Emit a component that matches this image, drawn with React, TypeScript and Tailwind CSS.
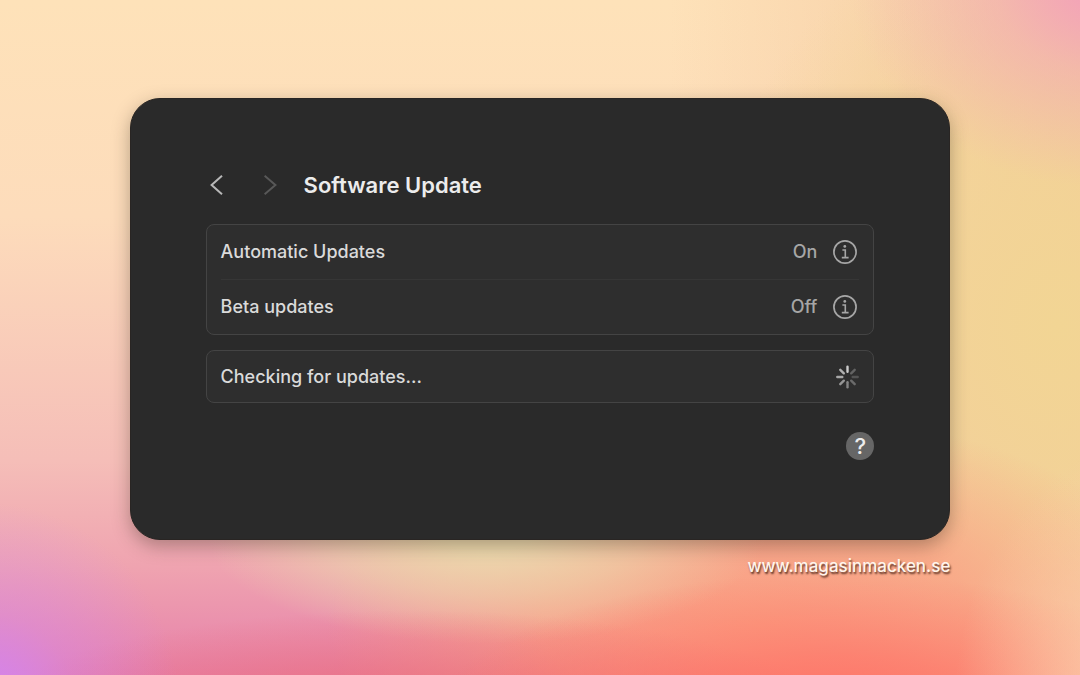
import type { ReactNode } from "react";

const SPOKES = [
  { angle: 0, opacity: 0.9 },
  { angle: 45, opacity: 0.3 },
  { angle: 90, opacity: 0.22 },
  { angle: 135, opacity: 0.35 },
  { angle: 180, opacity: 0.5 },
  { angle: 225, opacity: 0.6 },
  { angle: 270, opacity: 0.7 },
  { angle: 315, opacity: 0.75 },
];

const Spinner = () => (
  <svg
    className="size-6"
    viewBox="0 0 24 24"
    role="img"
    aria-label="Loading"
    stroke="#dcdcdc"
    strokeWidth="2.4"
    strokeLinecap="round"
  >
    {SPOKES.map(({ angle, opacity }) => (
      <line
        key={angle}
        x1="12.5"
        y1="1.8"
        x2="12.5"
        y2="6.8"
        opacity={opacity}
        transform={`rotate(${angle} 12.5 12)`}
      />
    ))}
  </svg>
);

const InfoIcon = () => (
  <svg className="size-6" viewBox="0 0 24 24" fill="none" stroke="#a6a6a6">
    <circle cx="12" cy="12" r="11.1" strokeWidth="1.7" />
    <circle cx="11.8" cy="6.4" r="1.4" fill="#a6a6a6" stroke="none" />
    <path d="M9.4 10h2.9v7.4M8.8 17.6h6.8" strokeWidth="1.6" />
  </svg>
);

const Panel = ({ children }: { children: ReactNode }) => (
  <div className="rounded-lg border border-[#444444] bg-[#2e2e2e] px-3.5">
    {children}
  </div>
);

const SettingRow = ({ label, value }: { label: string; value: string }) => (
  <div className="flex h-[54px] items-center justify-between">
    <span>{label}</span>
    <div className="flex items-center gap-4 pr-0.5 text-[#a6a6a6]">
      <span>{value}</span>
      <button type="button" aria-label={`About ${label}`}>
        <InfoIcon />
      </button>
    </div>
  </div>
);

export default function App() {
  return (
    <main className="min-h-screen bg-[radial-gradient(190px_200px_at_-1%_104%,#d285f4,#d285f466_45%,#d285f400),radial-gradient(250px_200px_at_102%_-2%,#f39fbb,#f39fbb77_42%,#f39fbb00),radial-gradient(190px_260px_at_106%_104%,#fdcbac,#fdcbac88_45%,#fdcbac00),radial-gradient(400px_150px_at_77%_107%,#ff6c62,#ff6c6299_45%,#ff6c6200),radial-gradient(440px_120px_at_38%_108%,#ec6f78,#ec6f7888_50%,#ec6f7800),radial-gradient(280px_110px_at_45%_79%,#ecd7ac_15%,#ecd7ac99_55%,#ecd7ac00),radial-gradient(430px_210px_at_70%_92%,#faa384,#faa384cc_50%,#faa38400),radial-gradient(360px_420px_at_98%_48%,#f2d594,#f2d594aa_55%,#f2d59400),linear-gradient(90deg,#f4c8a000_62%,#f4c8a0_100%),linear-gradient(180deg,#fee2b9_0%,#fddcbb_32%,#f5beb8_68%,#efa3b0_84%,#e680aa_100%)] px-[12%] pt-[98px] pb-24 font-['Inter','Liberation_Sans',sans-serif]">
      <section className="rounded-[30px] border border-[#292523] bg-[#2a2a2a] px-[75px] pt-[70px] pb-[79px] text-lg font-medium text-[#dadada] shadow-[0_6px_18px_rgba(50,40,25,0.35)]">
        <header className="flex h-8 items-center">
          <button type="button" aria-label="Back" className="mr-10 pl-1">
            <svg className="h-6 w-3.5" viewBox="0 0 14 24" fill="none">
              <path d="M12 2.8L1.6 12L12 21.2" stroke="#b8b8b8" strokeWidth="2" />
            </svg>
          </button>
          <button type="button" aria-label="Forward" disabled className="mr-[26px]">
            <svg className="h-6 w-3.5" viewBox="0 0 14 24" fill="none">
              <path d="M.6 2.8L11.4 12L.6 21.2" stroke="#585858" strokeWidth="2" />
            </svg>
          </button>
          <h1 className="text-[22px] font-semibold text-[#ececec]">
            Software Update
          </h1>
        </header>

        <div className="mt-[23px] flex flex-col gap-[15px]">
          <Panel>
            <SettingRow label="Automatic Updates" value="On" />
            <div className="h-px bg-[#363636]" />
            <SettingRow label="Beta updates" value="Off" />
          </Panel>
          <Panel>
            <div className="flex h-[51px] items-center justify-between">
              <span>Checking for updates...</span>
              <Spinner />
            </div>
          </Panel>
        </div>

        <div className="mt-[29px] flex justify-end">
          <button
            type="button"
            aria-label="Help"
            className="flex size-7 items-center justify-center rounded-full bg-[#666666] text-[22px] font-medium text-[#ededed]"
          >
            ?
          </button>
        </div>
      </section>

      <div className="mt-3 flex justify-end">
        <a
          href="https://www.magasinmacken.se"
          className="text-[17px] leading-7 font-medium text-[#fff5ec] [text-shadow:1px_2px_2px_rgba(50,20,10,0.8)]"
        >
          www.magasinmacken.se
        </a>
      </div>
    </main>
  );
}
